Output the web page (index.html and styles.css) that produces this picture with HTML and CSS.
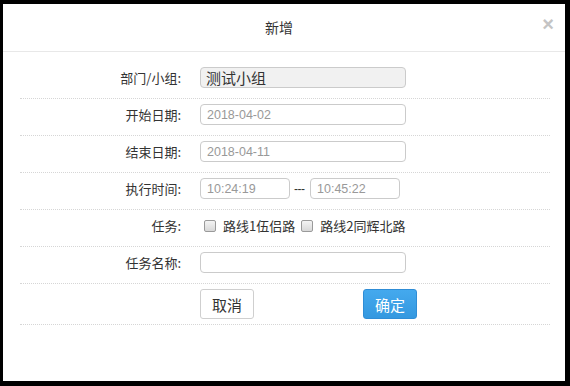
FILE: index.html
```html
<!DOCTYPE html>
<html lang="zh">
<head>
<meta charset="utf-8">
<title>新增</title>
<link rel="stylesheet" href="styles.css">
</head>
<body>
<div class="dialog">
  <div class="dialog-header">
    <span class="dialog-title">新增</span>
    <span class="dialog-close">×</span>
  </div>
  <form class="form">
    <div class="row row-first">
      <label class="label">部门/小组:</label>
      <input class="field field-group" type="text" value="测试小组" readonly>
    </div>
    <div class="row">
      <label class="label">开始日期:</label>
      <input class="field field-date" type="text" value="2018-04-02">
    </div>
    <div class="row">
      <label class="label">结束日期:</label>
      <input class="field field-date" type="text" value="2018-04-11">
    </div>
    <div class="row">
      <label class="label">执行时间:</label>
      <div class="time-range">
        <input class="field field-time" type="text" value="10:24:19">
        <span class="time-sep">---</span>
        <input class="field field-time" type="text" value="10:45:22">
      </div>
    </div>
    <div class="row">
      <label class="label">任务:</label>
      <div class="checks">
        <label class="check"><input class="checkbox" type="checkbox"><span class="check-text">路线1伍侣路</span></label>
        <label class="check"><input class="checkbox" type="checkbox"><span class="check-text">路线2同辉北路</span></label>
      </div>
    </div>
    <div class="row">
      <label class="label">任务名称:</label>
      <input class="field field-name" type="text" value="">
    </div>
    <div class="row row-buttons">
      <span class="label"></span>
      <div class="buttons">
        <button class="btn btn-cancel" type="button">取消</button>
        <button class="btn btn-ok" type="button">确定</button>
      </div>
    </div>
  </form>
</div>
</body>
</html>
```

FILE: styles.css
```css
html, body {
  margin: 0;
  padding: 0;
  background: #000;
}

body {
  width: 570px;
  height: 386px;
  overflow: hidden;
  font-family: "Noto Sans CJK SC", "Liberation Sans", sans-serif;
  color: #333;
}

.dialog {
  margin: 4px 5px 0 3px;
  height: 377px;
  background: #fff;
  box-sizing: border-box;
  position: relative;
}

.dialog-header {
  height: 48px;
  box-sizing: border-box;
  border-bottom: 1px solid #e8e8e8;
  padding: 10px 10px 0 0;
  text-align: center;
  position: relative;
}

.dialog-title {
  font-size: 14px;
  line-height: 14px;
  color: #333;
}

.dialog-close {
  position: absolute;
  right: 11px;
  top: 10px;
  font-family: "Liberation Sans", sans-serif;
  font-size: 20px;
  font-weight: bold;
  line-height: 20px;
  color: #c4c4c4;
}

.form {
  margin: 0 15px 0 17px;
  padding-top: 10px;
}

.row {
  display: flex;
  align-items: center;
  height: 37px;
  box-sizing: border-box;
  padding: 5px 0 10px;
  border-bottom: 1px dotted #d6d6d6;
  gap: 19px;
}

.row-buttons {
  height: 41px;
  padding: 5px 0 5px;
}

.label {
  width: 161px;
  flex: none;
  text-align: right;
  font-size: 13px;
  line-height: 21px;
  color: #333;
}

.field {
  box-sizing: border-box;
  height: 21px;
  margin: 0;
  border: 1px solid #cbcbcb;
  border-radius: 4px;
  background: #fff;
  padding: 0 6px;
  font-family: "Liberation Sans", sans-serif;
  font-size: 12.5px;
  color: #999;
  outline: none;
}

.field-group {
  width: 206px;
  background: #f1f1f1;
  font-family: "Noto Sans CJK SC", sans-serif;
  font-size: 15px;
  color: #333;
  padding: 0 5px;
  line-height: 19px;
}

.field-date,
.field-name {
  width: 206px;
}

.field-time {
  width: 90px;
}

.time-range {
  display: flex;
  align-items: center;
  gap: 4px;
}

.time-sep {
  font-family: "Liberation Sans", sans-serif;
  font-size: 12px;
  color: #333;
  width: 12px;
  letter-spacing: -0.5px;
}

.checks {
  display: flex;
  align-items: center;
  gap: 6px;
  margin-left: 4px;
  height: 21px;
}

.check {
  display: flex;
  align-items: center;
  gap: 7px;
}

.checkbox {
  appearance: none;
  -webkit-appearance: none;
  width: 12px;
  height: 12px;
  margin: 0;
  border: 1px solid #9a9a9a;
  border-radius: 2px;
  background: linear-gradient(#f4f4f4, #d8d8d8);
  box-sizing: border-box;
}

.check-text {
  font-size: 13px;
  line-height: 21px;
  color: #333;
}

.buttons {
  display: flex;
  gap: 109px;
}

.btn {
  width: 54px;
  height: 30px;
  box-sizing: border-box;
  border-radius: 3px;
  font-family: "Noto Sans CJK SC", sans-serif;
  font-size: 15px;
  padding: 0;
  margin: 0;
}

.btn-cancel {
  background: #fff;
  border: 1px solid #cfcfcf;
  color: #333;
}

.btn-ok {
  background: linear-gradient(#44a9ee, #3498e0);
  border: 1px solid #2f8dd6;
  color: #fff;
}
```
